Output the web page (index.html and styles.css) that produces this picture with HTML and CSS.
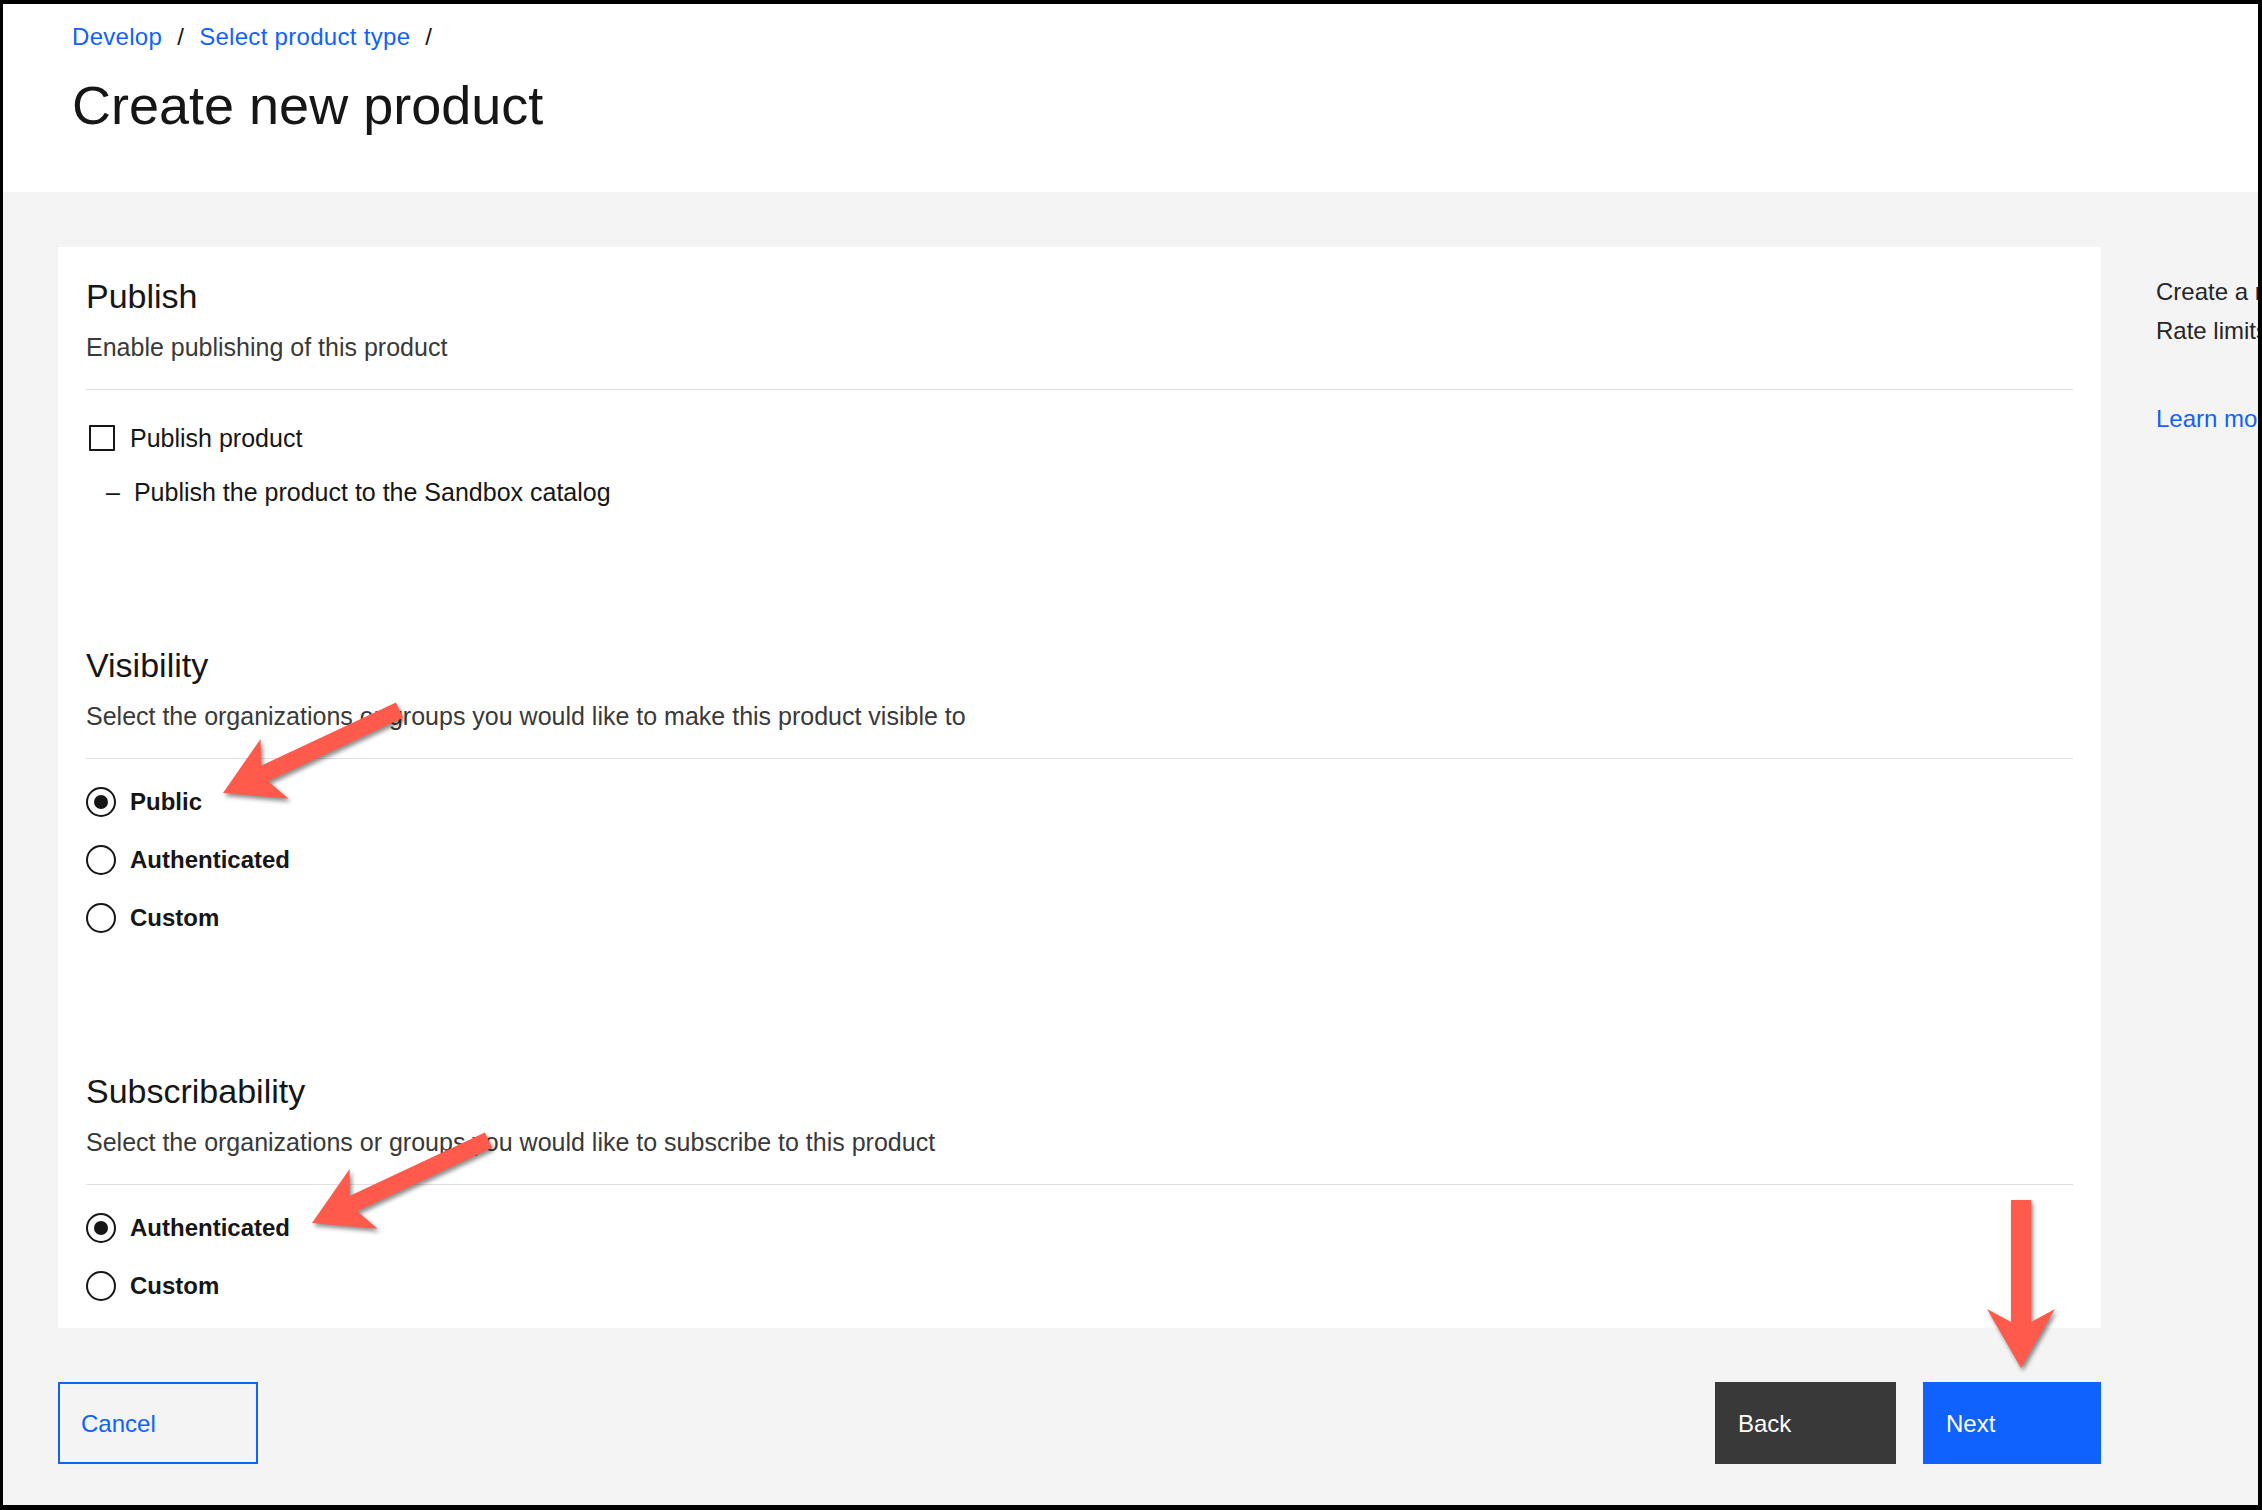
FILE: index.html
```html
<!DOCTYPE html>
<html lang="en">
<head>
<meta charset="utf-8">
<title>Create new product</title>
<link rel="stylesheet" href="styles.css">
</head>
<body>
<div class="screen">
  <header class="page-header">
    <nav class="breadcrumb">
      <a class="crumb">Develop</a><span class="sep">/</span><a class="crumb">Select product type</a><span class="sep">/</span>
    </nav>
    <h1 class="title">Create new product</h1>
  </header>

  <main class="content">
    <div class="form-column">
      <section class="card">
        <div class="group">
          <h2 class="group-title">Publish</h2>
          <p class="desc">Enable publishing of this product</p>
          <div class="rule"></div>
          <label class="checkbox-row"><span class="checkbox"></span><span>Publish product</span></label>
          <div class="sub-item"><span class="dash">–</span>Publish the product to the Sandbox catalog</div>
        </div>

        <div class="group">
          <h2 class="group-title">Visibility</h2>
          <p class="desc">Select the organizations or groups you would like to make this product visible to</p>
          <div class="rule"></div>
          <div class="options">
            <label class="radio-row"><span class="radio checked"></span><span>Public</span></label>
            <label class="radio-row"><span class="radio"></span><span>Authenticated</span></label>
            <label class="radio-row"><span class="radio"></span><span>Custom</span></label>
          </div>
        </div>

        <div class="group">
          <h2 class="group-title">Subscribability</h2>
          <p class="desc">Select the organizations or groups you would like to subscribe to this product</p>
          <div class="rule"></div>
          <div class="options">
            <label class="radio-row"><span class="radio checked"></span><span>Authenticated</span></label>
            <label class="radio-row"><span class="radio"></span><span>Custom</span></label>
          </div>
        </div>
      </section>

      <div class="actions">
        <button class="btn btn-cancel">Cancel</button>
        <div class="actions-right">
          <button class="btn btn-back">Back</button>
          <button class="btn btn-next">Next</button>
        </div>
      </div>
    </div>

    <aside class="side">
      <p class="side-text">Create a new product and add APIs and plans to it.<br>Rate limits are set for each plan in the product.</p>
      <a class="side-link">Learn more</a>
    </aside>
  </main>
</div>

<svg class="annotations" width="2262" height="1510" viewBox="0 0 2262 1510" xmlns="http://www.w3.org/2000/svg">
  <g class="arrows">
    <polygon points="223,793 260.6,738.9 261,765.8 395.9,702.4 403.1,717.8 268.2,781.2 288.6,798.7"/>
    <polygon points="312,1223 349.6,1168.9 350,1195.8 484.9,1132.4 492.1,1147.8 357.2,1211.2 377.6,1228.7"/>
    <polygon points="2021,1368 1987,1309 2011,1322 2011,1200 2031,1200 2031,1322 2055,1309"/>
  </g>
</svg>
</body>
</html>
```

FILE: styles.css
```css
html, body {
  margin: 0;
  padding: 0;
  overflow: hidden;
}

body {
  background: #000;
  font-family: "Liberation Sans", Arial, sans-serif;
  color: #161616;
}

.screen {
  margin: 4px 4px 5px 3px;
  height: 1501px;
  background: #f4f4f4;
  overflow: hidden;
}

/* Header */
.page-header {
  background: #fff;
  height: 188px;
  box-sizing: border-box;
  padding: 17px 0 0 69px;
}

.breadcrumb {
  display: flex;
  font-size: 24px;
  line-height: 32px;
  letter-spacing: 0.3px;
}

.crumb {
  color: #0f62fe;
  text-decoration: none;
}

.sep {
  color: #161616;
  margin: 0 15px;
}

.title {
  margin: 20px 0 0;
  font-size: 54px;
  line-height: 64px;
  font-weight: 400;
  color: #161616;
}

/* Main */
.content {
  display: flex;
  gap: 55px;
  padding: 55px 0 0 55px;
}

.form-column {
  flex: 0 0 2043px;
  width: 2043px;
}

.card {
  background: #fff;
  padding: 27px 28px 26px;
}

.group + .group {
  margin-top: 135px;
}

.group-title {
  margin: 0;
  font-size: 34px;
  line-height: 44px;
  font-weight: 400;
  color: #161616;
}

.desc {
  margin: 13px 0 0;
  font-size: 25px;
  line-height: 32px;
  color: #393939;
}

.rule {
  margin-top: 26px;
  height: 1px;
  background: #e0e0e0;
}

.checkbox-row {
  margin-top: 32px;
  display: flex;
  align-items: center;
  gap: 15px;
  font-size: 25px;
  line-height: 32px;
  color: #161616;
}

.checkbox {
  margin-left: 3px;
  width: 26px;
  height: 26px;
  box-sizing: border-box;
  border: 2px solid #161616;
  border-radius: 1px;
}

.sub-item {
  margin-top: 22px;
  padding-left: 20px;
  font-size: 25px;
  line-height: 32px;
  color: #161616;
}

.dash {
  margin-right: 14px;
}

.options {
  padding-top: 27px;
  display: flex;
  flex-direction: column;
  gap: 26px;
}

.radio-row {
  display: flex;
  align-items: center;
  gap: 14px;
  font-size: 24px;
  line-height: 32px;
  font-weight: 700;
  color: #161616;
}

.radio {
  width: 30px;
  height: 30px;
  box-sizing: border-box;
  border: 2px solid #161616;
  border-radius: 50%;
  display: flex;
  align-items: center;
  justify-content: center;
}

.radio.checked::after {
  content: "";
  width: 14px;
  height: 14px;
  border-radius: 50%;
  background: #161616;
}

/* Actions */
.actions {
  margin-top: 54px;
  display: flex;
  justify-content: space-between;
}

.actions-right {
  display: flex;
  gap: 27px;
}

.btn {
  display: flex;
  align-items: flex-start;
  box-sizing: border-box;
  height: 82px;
  margin: 0;
  border: none;
  font-family: inherit;
  font-size: 24px;
  line-height: 32px;
  text-align: left;
  padding: 26px 0 0 23px;
  cursor: pointer;
}

.btn-cancel {
  width: 200px;
  background: transparent;
  border: 2px solid #0f62fe;
  color: #0f62fe;
  padding: 24px 0 0 21px;
}

.btn-back {
  width: 181px;
  background: #393939;
  color: #fff;
}

.btn-next {
  width: 178px;
  background: #0f62fe;
  color: #fff;
}

/* Side panel */
.side {
  flex: 0 0 auto;
  padding-top: 25px;
  white-space: nowrap;
  font-size: 24px;
  line-height: 39px;
}

.side-text {
  margin: 0;
  color: #262626;
}

.side-link {
  display: block;
  margin-top: 49px;
  color: #0f62fe;
  text-decoration: none;
}

/* Annotation arrows */
.annotations {
  position: absolute;
  left: 0;
  top: 0;
  pointer-events: none;
}

.arrows {
  fill: #ff5a4b;
  filter: drop-shadow(2px 3px 2px rgba(0, 0, 0, 0.45));
}
```
